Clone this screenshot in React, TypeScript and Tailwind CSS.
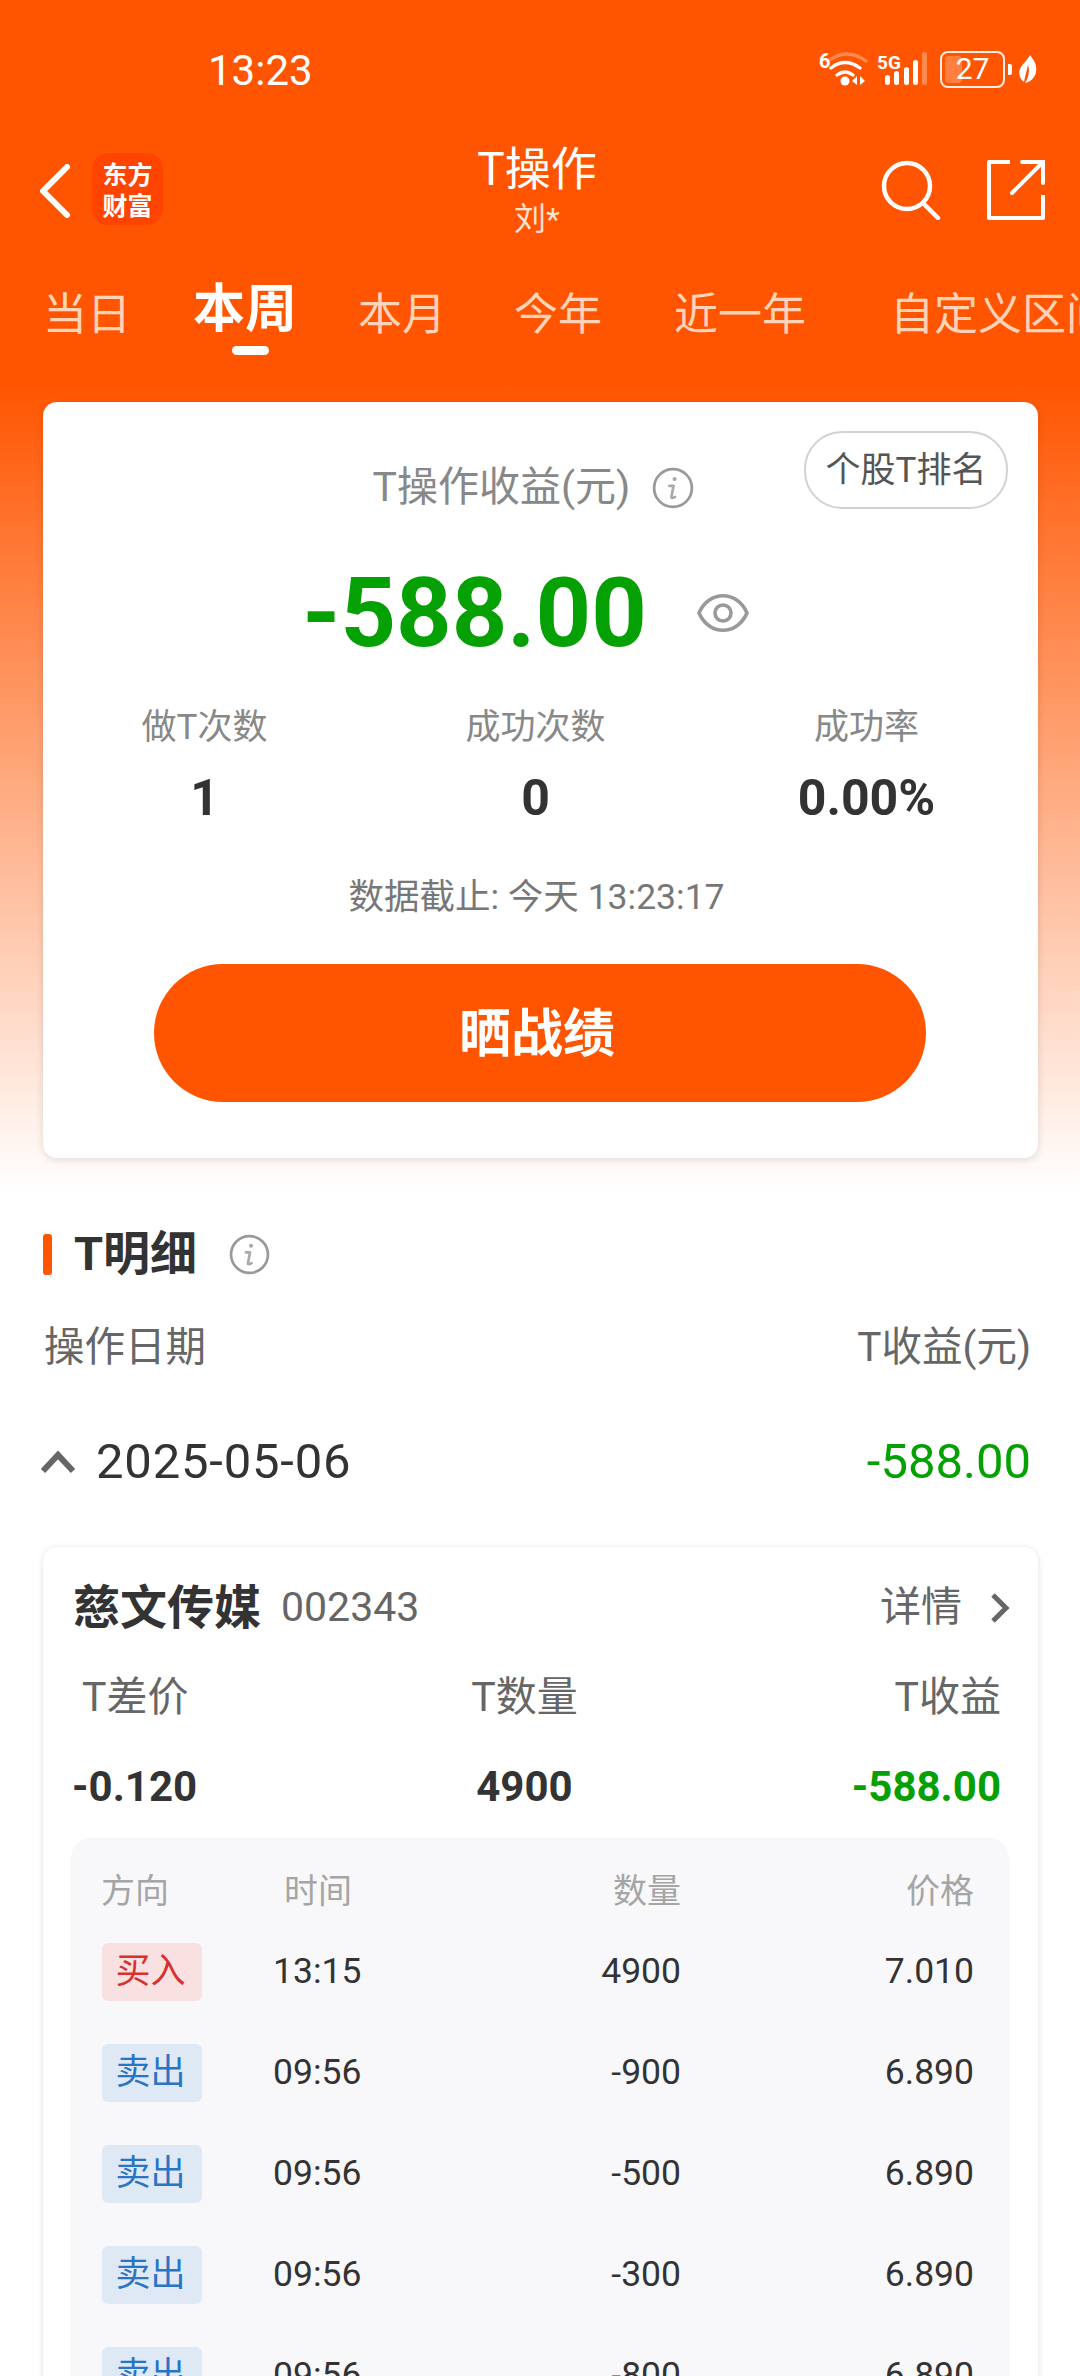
import React from 'react';

const FONT = { fontFamily: 'Roboto, "Noto Sans CJK SC", sans-serif' };

const trades = [
  { side: '买入', time: '13:15', qty: '4900', price: '7.010' },
  { side: '卖出', time: '09:56', qty: '-900', price: '6.890' },
  { side: '卖出', time: '09:56', qty: '-500', price: '6.890' },
  { side: '卖出', time: '09:56', qty: '-300', price: '6.890' },
  { side: '卖出', time: '09:56', qty: '-800', price: '6.890' },
];

const InfoIcon: React.FC<{ size: number }> = ({ size }) => (
  <svg width={size} height={size} viewBox="0 0 40 40" fill="none">
    <circle cx="20" cy="20" r="18" stroke="#999" strokeWidth="2.6" />
    <circle cx="21.5" cy="11.5" r="2" fill="#aaa" />
    <path d="M16.5 18h4l-2 10.5c-.2 1.2 1 1.5 3.5 0" stroke="#aaa" strokeWidth="2.6" fill="none" strokeLinecap="round" strokeLinejoin="round" />
  </svg>
);

const StatusIcons: React.FC = () => (
  <div className="absolute right-[43px] top-[50px] flex items-center text-white">
    <svg width="109" height="38" viewBox="0 0 109 38" fill="none" className="mr-[12px]">
      <text x="0" y="18" fill="#fff" fontSize="20" fontWeight="700" fontFamily="Roboto">6</text>
      <path d="M12 9 Q29 -2 47 11" stroke="#ff8a4d" strokeWidth="3.4" strokeLinecap="round" />
      <path d="M12 18 Q26 7 41 18" stroke="#fff" strokeWidth="3.4" strokeLinecap="round" />
      <path d="M18 25 Q26 19 34 25" stroke="#fff" strokeWidth="3.4" strokeLinecap="round" />
      <circle cx="26" cy="31" r="4.5" fill="#fff" />
      <path d="M33 31 l5-5 v9 z M41 26 l5 5 -5 4 z" fill="#fff" />
      <text x="58" y="19" fill="#fff" fontSize="19" fontWeight="700" fontFamily="Roboto">5G</text>
      <rect x="66" y="25" width="5" height="10" rx="2.5" fill="#fff" />
      <rect x="75" y="21" width="5" height="14" rx="2.5" fill="#fff" />
      <rect x="85" y="17" width="5" height="18" rx="2.5" fill="#fff" />
      <rect x="94" y="10" width="5" height="25" rx="2.5" fill="#fff" />
      <rect x="103" y="2" width="5" height="33" rx="2.5" fill="#ff8a4d" />
    </svg>
    <div className="relative flex h-[37px] w-[65px] items-center justify-center rounded-[8px] border-[2px] border-white/90">
      <div className="absolute left-[3px] top-[3px] h-[27px] w-[17px] rounded-[4px] bg-white/25" />
      <span className="relative text-[30px] leading-none" style={FONT}>27</span>
    </div>
    <div className="ml-[3px] h-[11px] w-[4px] rounded-r-[2px] bg-white" />
    <svg width="18" height="28" viewBox="0 0 18 28" className="ml-[7px]">
      <path d="M11 0 C16 6 18 11 17 17 C16 23 11 27 6 28 C10 22 11 15 9 10 C8 15 6 21 5 27 C1 24 -1 19 1 14 C3 9 8 6 11 0 Z" fill="#fff" />
    </svg>
  </div>
);

const Tab: React.FC<{ label: string; className: string; active?: boolean }> = ({ label, className, active }) => (
  <div className={`relative shrink-0 ${className}`}>
    <span className={active ? 'block text-[52px] font-bold leading-[60px] text-white' : 'block pt-[5px] text-[44px] leading-[60px] text-[#ffd3b8]'}>{label}</span>
    {active && <div className="absolute left-[39px] top-[66px] h-[9px] w-[37px] rounded-full bg-white" />}
  </div>
);

const Stat: React.FC<{ label: string; value: string }> = ({ label, value }) => (
  <div className="flex flex-col items-center">
    <div className="flex h-[50px] items-center pt-[3px] text-[35px] text-[#888]">{label}</div>
    <div className="mt-[16px] flex h-[60px] items-center text-[50px] font-bold text-[#333]">{value}</div>
  </div>
);

const App: React.FC = () => {
  return (
    <div className="h-[2376px] w-[1080px] overflow-hidden bg-white" style={FONT}>
      <div className="relative bg-[linear-gradient(180deg,#ff5500_0%,#ff5500_32%,#ffffff_100%)] pb-[32px]">
        <div className="absolute left-[208px] top-[47px] text-[42px] leading-[48px] text-white">13:23</div>
        <StatusIcons />

        {/* top bar */}
        <div className="relative flex h-[250px] items-start pt-[153px]">
          <svg width="32" height="54" viewBox="0 0 32 54" fill="none" className="ml-[39px] mt-[11px]">
            <path d="M28 3 L4 27 L28 51" stroke="#fff" strokeWidth="6" strokeLinecap="round" strokeLinejoin="round" />
          </svg>
          <div className="ml-[21px] flex h-[72px] w-[71px] flex-col items-center justify-center rounded-[16px] bg-[#ff4400] text-[25px] font-bold leading-[31px] text-white" style={{ fontFamily: '"Noto Sans CJK SC", sans-serif' }}>
            <span>东方<br />财富</span>
          </div>
          <div className="absolute left-0 right-0 top-[142px] flex flex-col items-center pr-[6px] text-white">
            <div className="text-[46px] leading-[54px]">T操作</div>
            <div className="mt-[4px] text-[32px] leading-[38px] text-[#ffe3d2]">刘*</div>
          </div>
          <svg width="60" height="60" viewBox="0 0 60 60" fill="none" className="ml-auto mt-[7px]">
            <circle cx="26" cy="26" r="23" stroke="#fff" strokeWidth="4.5" />
            <path d="M42 43 L57 58" stroke="#fff" strokeWidth="4.5" strokeLinecap="round" />
          </svg>
          <svg width="58" height="60" viewBox="0 0 58 60" fill="none" className="ml-[46px] mr-[35px] mt-[7px]">
            <path d="M23 2 H2 V58 H56 V35" stroke="#fff" strokeWidth="4" strokeLinejoin="round" />
            <path d="M35 2 H56 V23 M56 2 L25 33" stroke="#fff" strokeWidth="4" strokeLinecap="round" />
          </svg>
        </div>

        {/* period tabs */}
        <div className="absolute left-0 top-[280px] flex h-[80px] w-[1080px] items-start overflow-hidden whitespace-nowrap">
          <Tab label="当日" className="ml-[43px]" />
          <Tab label="本周" className="ml-[62px]" active />
          <Tab label="本月" className="ml-[61px]" />
          <Tab label="今年" className="ml-[68px]" />
          <Tab label="近一年" className="ml-[72px]" />
          <Tab label="自定义区间" className="ml-[84px]" />
        </div>

        {/* summary card */}
        <div className="relative ml-[43px] mt-[152px] w-[995px] rounded-[14px] bg-white pb-[56px] pt-[61px] shadow-[0_2px_8px_rgba(0,0,0,0.12)]">
          <div className="absolute right-[30px] top-[29px] flex h-[78px] w-[204px] items-center justify-center rounded-[38px] border-[2px] border-[#d2d2d2] pt-[2px] text-[35px] text-[#555]">个股T排名</div>
          <div className="flex h-[50px] items-center justify-center gap-[22px] pr-[14px] text-[41px] text-[#888]">
            <span>T操作收益(元)</span>
            <InfoIcon size={42} />
          </div>
          <div className="mt-[50px] flex h-[100px] items-center justify-center gap-[50px] pr-[30px]">
            <span className="text-[97px] font-bold leading-none text-[#04a004]">-588.00</span>
            <svg width="52" height="40" viewBox="0 0 52 40" fill="none">
              <path d="M2 20 C12 -3 40 -3 50 20 C40 43 12 43 2 20 Z" stroke="#999" strokeWidth="3.6" />
              <circle cx="26" cy="20" r="8" stroke="#999" strokeWidth="3.6" />
            </svg>
          </div>
          <div className="-ml-[4px] mt-[39px] grid w-[993px] grid-cols-3">
            <Stat label="做T次数" value="1" />
            <Stat label="成功次数" value="0" />
            <Stat label="成功率" value="0.00%" />
          </div>
          <div className="mt-[47px] flex h-[44px] items-center justify-center pr-[8px] pt-[2px] text-[35.5px] text-[#777]">数据截止: 今天 13:23:17</div>
          <div className="ml-[111px] mt-[45px] flex h-[138px] w-[772px] items-center justify-center rounded-full bg-[#ff5500] pr-[6px] pt-[3px] text-[52px] font-bold text-white">晒战绩</div>
        </div>
      </div>

      {/* T detail */}
      <div className="mt-[44px] flex h-[41px] items-center">
        <div className="ml-[43px] h-[41px] w-[9px] rounded-[3px] bg-[#ff5500]" />
        <span className="ml-[22px] text-[47px] font-bold text-[#333]">T明细</span>
        <div className="ml-[32px]"><InfoIcon size={41} /></div>
      </div>
      <div className="mt-[50px] flex h-[44px] items-center justify-between pl-[44px] pr-[49px] text-[40.5px] text-[#666]">
        <span>操作日期</span>
        <span>T收益(元)</span>
      </div>
      <div className="mt-[67px] flex h-[52px] items-center pr-[49px]">
        <svg width="36" height="24" viewBox="0 0 36 24" fill="none" className="ml-[40px]">
          <path d="M3 21 L18 5 L33 21" stroke="#666" strokeWidth="6" />
        </svg>
        <span className="ml-[20px] text-[49px] tracking-[0.8px] text-[#333]">2025-05-06</span>
        <span className="ml-auto text-[49px] text-[#04a004]">-588.00</span>
      </div>

      {/* stock card */}
      <div className="ml-[43px] mt-[59px] w-[995px] rounded-[14px] bg-white pb-[40px] pt-[32px] shadow-[0_1px_6px_rgba(0,0,0,0.13)]">
        <div className="flex h-[58px] items-center pl-[30px] pr-[28px]">
          <span className="text-[47px] font-bold text-[#333]">慈文传媒</span>
          <span className="ml-[20px] text-[41px] text-[#666]">002343</span>
          <span className="ml-auto text-[41px] text-[#666]">详情</span>
          <svg width="20" height="32" viewBox="0 0 20 32" fill="none" className="ml-[28px]">
            <path d="M3 3 L16 16 L3 29" stroke="#666" strokeWidth="5" />
          </svg>
        </div>
        <div className="mt-[38px] flex h-[46px] items-center justify-between pl-[39px] pr-[37px] text-[41px] text-[#666]">
          <span>T差价</span>
          <span className="pr-[34px]">T数量</span>
          <span>T收益</span>
        </div>
        <div className="relative mt-[40px] flex h-[50px] items-center justify-between pl-[29px] pr-[37px] text-[42px] font-bold text-[#333]">
          <span>-0.120</span>
          <span>4900</span>
          <span className="text-[#04a004]">-588.00</span>
        </div>
        <div className="ml-[28px] mt-[27px] w-[938px] rounded-[20px] bg-[#f8f8fb] pb-[40px] pt-[31px]">
          <div className="flex h-[44px] items-center whitespace-nowrap pl-[30px] pr-[35px] text-[34px] text-[#a5a5a5]">
            <span className="w-[70px]">方向</span>
            <span className="ml-[113px] w-[150px]">时间</span>
            <span className="w-[247px] text-right">数量</span>
            <span className="flex-1 text-right">价格</span>
          </div>
          {trades.map((t, i) => (
            <div key={i} className={`flex h-[58px] items-center pl-[31px] pr-[35px] text-[35.5px] text-[#333] ${i === 0 ? 'mt-[30px]' : 'mt-[43px]'}`}>
              <div className={`flex h-[58px] w-[100px] items-center justify-center rounded-[6px] pr-[3px] text-[35px] ${t.side === '买入' ? 'bg-[#f9e1e2] text-[#d9302e]' : 'bg-[#dfe9f6] text-[#2a74c4]'}`}>{t.side}</div>
              <span className="ml-[71px] w-[151px]">{t.time}</span>
              <span className="w-[257px] text-right">{t.qty}</span>
              <span className="flex-1 text-right">{t.price}</span>
            </div>
          ))}
        </div>
      </div>
    </div>
  );
};

export default App;
